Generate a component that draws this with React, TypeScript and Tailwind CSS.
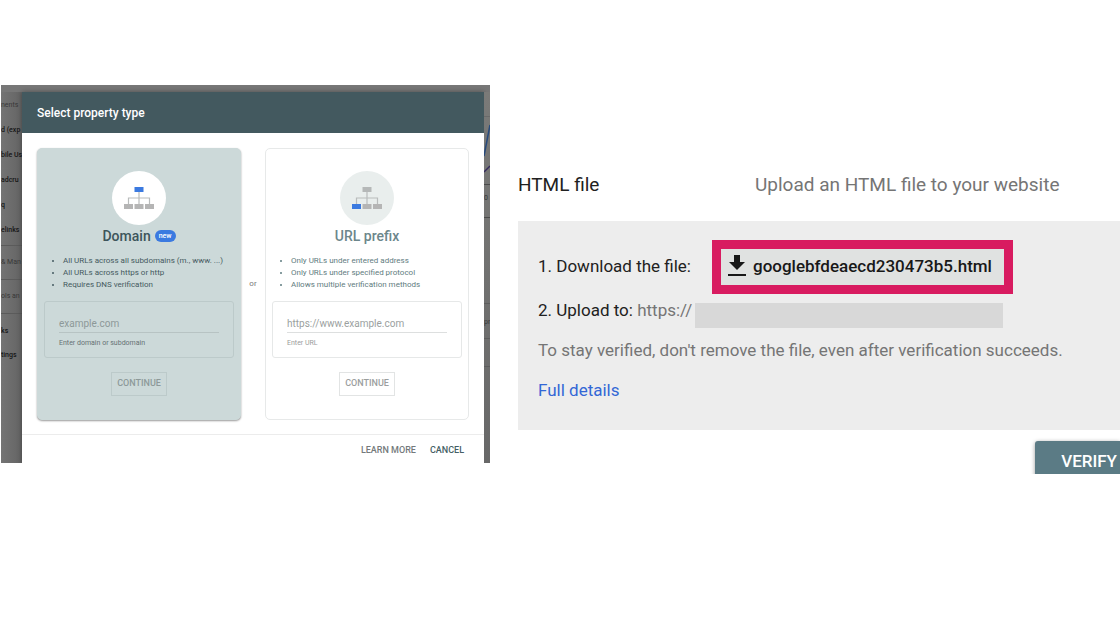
import React from 'react';

interface PropertyCardProps {
  id: string;
  title: string;
  isNew?: boolean;
  selected?: boolean;
  points: string[];
  placeholder: string;
  hint: string;
}

const menuItems = [
  { label: 'nents', classes: 'text-[#383838]' },
  { label: 'd (exp', classes: 'font-medium text-[#161616]' },
  { label: 'bile Us', classes: 'font-medium text-[#161616]' },
  { label: 'adcru', classes: 'font-medium text-[#161616]' },
  { label: 'q', classes: 'font-medium text-[#161616]' },
  { label: 'elinks', classes: 'font-medium text-[#161616]' },
];

const SitemapIcon: React.FC<{ selected?: boolean }> = ({ selected }) => {
  const top = selected ? '#3b7ae0' : '#b5b8b8';
  const left = selected ? '#b5b5b5' : '#3b7ae0';

  return (
    <svg width="30" height="24" viewBox="0 0 30 24" fill="none" aria-hidden="true">
      <path d="M15 6v12M4.5 18v-6h21v6" stroke="#b9bcbc" strokeWidth="1.2" />
      <rect x="10.5" y="1" width="9" height="5" fill={top} />
      <rect x="0" y="18" width="9" height="5" fill={left} />
      <rect x="10.5" y="18" width="9" height="5" fill="#b5b5b5" />
      <rect x="21" y="18" width="9" height="5" fill="#b5b5b5" />
    </svg>
  );
};

const PropertyCard: React.FC<PropertyCardProps> = ({
  id,
  title,
  isNew,
  selected,
  points,
  placeholder,
  hint,
}) => {
  return (
    <section
      className={`min-w-0 flex-1 flex flex-col rounded-[5px] border px-1.5 pt-[22px] pb-[23px] ${
        selected ? 'bg-[#ccd9d9] border-[#ccd9d9] shadow-[0_1px_2px_rgba(0,0,0,0.4)]' : 'bg-white border-[#e7e9e9]'
      }`}
    >
      <div
        className={`self-center w-[54px] h-[54px] rounded-full flex items-center justify-center ${
          selected ? 'bg-white' : 'bg-[#e9eeed]'
        }`}
      >
        <SitemapIcon selected={selected} />
      </div>

      <div className="mt-0.5 h-[18px] flex items-center justify-center gap-1">
        <h3 className={`text-[14px] leading-[18px] font-medium ${selected ? 'text-[#3d555b]' : 'text-[#6c868b]'}`}>
          {title}
        </h3>
        {isNew && (
          <span className="h-3 px-1 rounded-full bg-[#3b7ae0] text-white text-[7px] leading-[12px] font-medium">
            new
          </span>
        )}
      </div>

      <ul
        className={`mt-2.5 pl-[19px] list-disc text-[8px] leading-[12px] whitespace-nowrap ${
          selected ? 'text-[#455a60]' : 'text-[#5f7c80]'
        }`}
      >
        {points.map((point) => (
          <li key={point}>{point}</li>
        ))}
      </ul>

      <div
        className={`mt-2.5 h-[57px] flex flex-col rounded-[3px] border px-3.5 pt-3.5 ${
          selected ? 'border-[#bccaca]' : 'border-[#e6e8e8]'
        }`}
      >
        <input
          id={id}
          type="text"
          placeholder={placeholder}
          className={`w-full h-[17px] pb-0.5 border-b bg-transparent text-[10px] outline-none ${
            selected ? 'border-[#b7c3c3] placeholder:text-[#8d9898]' : 'border-[#dddfdf] placeholder:text-[#9b9fa0]'
          }`}
        />
        <label
          htmlFor={id}
          className={`mt-1 text-[7px] leading-[12px] ${selected ? 'text-[#667274]' : 'text-[#9a9c9c]'}`}
        >
          {hint}
        </label>
      </div>

      <button
        type="button"
        className={`mt-3.5 self-center h-6 px-[5px] border text-[9px] font-medium ${
          selected ? 'border-[#bccaca] text-[#8d9999]' : 'border-[#e2e4e4] text-[#9b9e9e]'
        }`}
      >
        CONTINUE
      </button>
    </section>
  );
};

const PropertyDialog: React.FC = () => {
  return (
    <div className="self-start min-w-0 flex bg-[#777777] pt-[7px] overflow-hidden">
      {/* dimmed side menu behind the dialog */}
      <aside className="w-[21px] shrink-0 overflow-hidden whitespace-nowrap bg-linear-to-r from-[#747474] to-[#646464] text-[7px] leading-[12px]">
        <ul className="pt-[7px] flex flex-col gap-[13px]">
          {menuItems.map((item) => (
            <li key={item.label} className={item.classes}>{item.label}</li>
          ))}
        </ul>
        <p className="mt-[9px] pt-2.5 pb-[11px] border-t border-[#5b5b5b] text-[#383838]">&amp; Man</p>
        <p className="pt-2.5 pb-[11px] border-t border-[#5b5b5b] text-[#383838]">ols an</p>
        <ul className="pt-[11px] border-t border-[#5b5b5b] flex flex-col gap-3 font-medium text-[#161616]">
          <li>ks</li>
          <li>tings</li>
        </ul>
      </aside>

      <div className="min-w-0 flex-1 bg-white shadow-[0_0_5px_rgba(0,0,0,0.35)]">
        <header className="h-[41px] px-[15px] flex items-center bg-[#43595f]">
          <h2 className="text-[12px] font-medium text-white">Select property type</h2>
        </header>

        <div className="px-[15px] pt-[15px] pb-3.5 flex">
          <PropertyCard
            id="domain"
            title="Domain"
            isNew
            selected
            points={['All URLs across all subdomains (m., www. ...)', 'All URLs across https or http', 'Requires DNS verification']}
            placeholder="example.com"
            hint="Enter domain or subdomain"
          />
          <div className="w-6 shrink-0 flex items-center justify-center text-[8px] text-[#777777]">or</div>
          <PropertyCard
            id="url-prefix"
            title="URL prefix"
            points={['Only URLs under entered address', 'Only URLs under specified protocol', 'Allows multiple verification methods']}
            placeholder="https://www.example.com"
            hint="Enter URL"
          />
        </div>

        <footer className="h-[29px] pt-[9px] px-5 flex justify-end gap-3.5 border-t border-[#ececec] text-[9px] leading-[12px] font-medium">
          <a href="#learn" className="text-[#747a7b]">LEARN MORE</a>
          <button type="button" className="h-3 text-[#455f65]">CANCEL</button>
        </footer>
      </div>

      {/* sliver of the chart page on the other side */}
      <div className="w-1.5 shrink-0 overflow-hidden bg-linear-to-b from-[#7a7a78] to-[#686868] text-[7px] leading-[12px] text-[#383838]">
        <svg className="block" width="6" height="92" viewBox="0 0 6 92" fill="none" aria-hidden="true">
          <path d="M0 24.5h6" stroke="#6a6a6a" />
          <path d="M0 64L6 33" stroke="#274a7c" strokeWidth="1.5" />
          <path d="M0 80l6-6" stroke="#352a5c" strokeWidth="1.5" />
        </svg>
        <p className="h-[34px] pt-[7px] border-y border-[#4a4a4a]">0</p>
        <p className="mt-[85px] h-9 pt-3 border-y border-[#5d5d5d]">pr</p>
        <div className="h-7 border-b border-[#5d5d5d]" />
      </div>
    </div>
  );
};

const HtmlFileMethod: React.FC = () => {
  return (
    <div className="min-w-0 pt-[88px] text-[17px] leading-[24px] text-[#212121] whitespace-nowrap">
      <div className="mb-6 flex text-[19px]">
        <h2 className="w-[237px] shrink-0">HTML file</h2>
        <p className="text-[#757575]">Upload an HTML file to your website</p>
      </div>

      <div className="bg-[#ededed] pl-5 pt-[19px] pb-7">
        <div className="flex items-center">
          <span className="w-[174px] shrink-0 pb-[3px]">1. Download the file:</span>
          <a
            href="#download"
            className="w-[301px] h-[54px] pl-1.5 pb-[3px] flex items-center gap-1.5 border-9 border-[#d81b60] bg-[#e0e2e1] font-medium text-[#181818]"
          >
            <svg width="20" height="24" viewBox="0 0 20 24" fill="#181818" aria-hidden="true">
              <path d="M7 1h6v7h5l-8 8-8-8h5zM1 20h18v2H1z" />
            </svg>
            googlebfdeaecd230473b5.html
          </a>
        </div>
        <div className="mt-1 flex items-start">
          <span className="w-[157px] shrink-0">
            2. Upload to: <span className="text-[#757575]">https://</span>
          </span>
          <span className="mt-[5px] w-[308px] h-[25px] bg-[#d8d8d8]" />
        </div>
        <p className="mt-2.5 text-[#757575]">To stay verified, don't remove the file, even after verification succeeds.</p>
        <a href="#details" className="mt-4 block w-fit text-[#3367d6]">Full details</a>
      </div>

      <div className="pt-[11px] h-11 flex justify-end overflow-hidden">
        <button
          type="button"
          className="h-10 shrink-0 pl-[26px] pr-[3px] rounded-tl-[3px] bg-[#5b7b85] font-medium text-white shadow-[0_1px_4px_rgba(0,0,0,0.4)]"
        >
          VERIFY
        </button>
      </div>
    </div>
  );
};

export default function App() {
  return (
    <main className="min-h-screen bg-white pt-[85px] pl-px grid grid-cols-[minmax(0,489fr)_minmax(0,602fr)] items-start gap-7 font-[Roboto,sans-serif]">
      <PropertyDialog />
      <HtmlFileMethod />
    </main>
  );
}
